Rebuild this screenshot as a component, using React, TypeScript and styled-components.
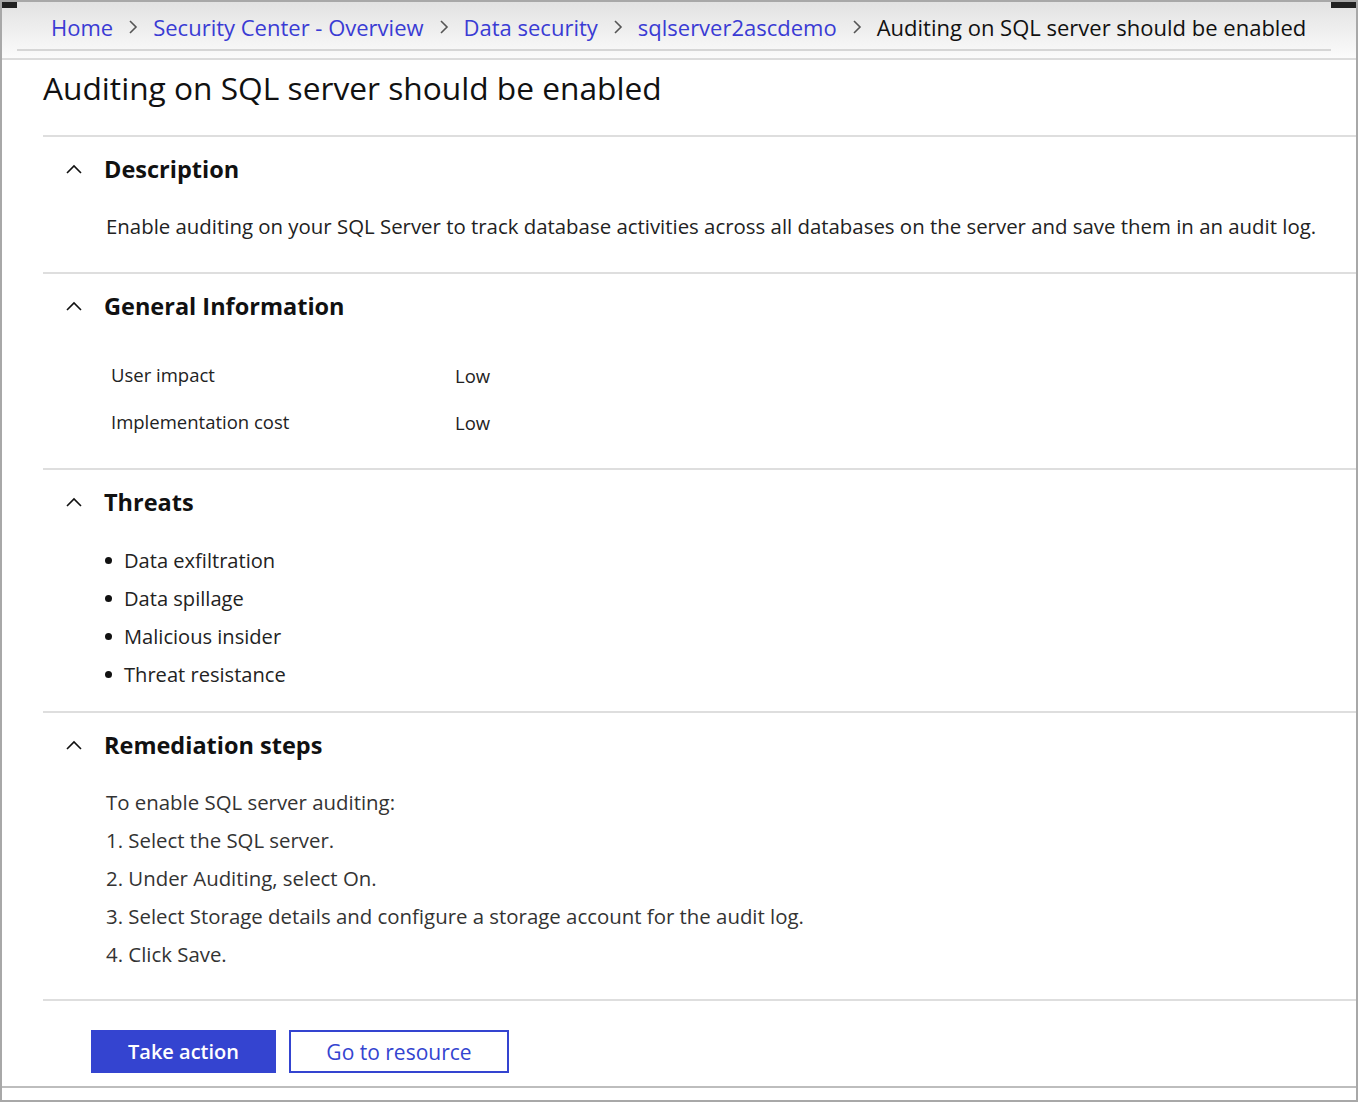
import React from "react";
import styled, { createGlobalStyle } from "styled-components";

const Global = createGlobalStyle`
  html, body { margin: 0; padding: 0; background: #fff; }
  body { font-family: "Open Sans", "Noto Sans", sans-serif; color: #1a1a1a; }
  * { box-sizing: border-box; }
`;

const Frame = styled.div`
  width: 1358px;
  height: 1102px;
  border: 2px solid #a8a8a8;
  display: flex;
  flex-direction: column;
  background: #fff;
`;

const Header = styled.header`
  position: relative;
  height: 58px;
  flex: none;
  background: linear-gradient(#e2e2e2, #fbfbfb);
  border-bottom: 2px solid #dcdcdc;
  padding: 0 25px 0 15px;
`;

const Cap = styled.span<{ $side: "left" | "right" }>`
  position: absolute;
  top: 0;
  ${(p) => (p.$side === "left" ? "left: 0; width: 15px;" : "right: 0; width: 25px;")}
  height: 6px;
  background: #222;
`;

const Crumbs = styled.nav`
  height: 49px;
  border-bottom: 2px solid #d6d6d6;
  display: flex;
  align-items: center;
  padding-left: 34px;
  padding-top: 2px;
  font-size: 22px;
  white-space: nowrap;
`;

const Crumb = styled.a`
  color: #3a3bd4;
  text-decoration: none;
`;

const Current = styled.span`
  color: #111;
`;

const Sep = styled.span`
  display: inline-flex;
  margin: 0 15px;
  color: #555;
`;

const Main = styled.main`
  flex: 1;
  padding-left: 41px;
  display: flex;
  flex-direction: column;
`;

const Title = styled.h1`
  margin: 0;
  height: 75px;
  display: flex;
  align-items: center;
  padding-bottom: 20px;
  font-size: 31.7px;
  font-weight: 400;
  color: #111;
`;

const Section = styled.section<{ $h: number }>`
  border-top: 2px solid #dedede;
  height: ${(p) => p.$h}px;
  display: flex;
  flex-direction: column;
`;

const SectionHead = styled.div`
  height: 64px;
  flex: none;
  display: flex;
  align-items: center;
  padding-left: 22px;
  gap: 21px;
`;

const SectionTitle = styled.h2`
  margin: 0;
  font-size: 23.5px;
  font-weight: 700;
  color: #111;
`;

const Body = styled.div<{ $pl: number; $pt?: number; $color?: string }>`
  padding-left: ${(p) => p.$pl}px;
  padding-top: ${(p) => p.$pt ?? 0}px;
  font-size: 20.4px;
  color: ${(p) => p.$color ?? "#222"};
`;

const Para = styled.p<{ $h?: number }>`
  margin: 0;
  height: ${(p) => p.$h ?? 38}px;
  display: flex;
  align-items: center;
`;

const InfoGrid = styled.div`
  display: grid;
  grid-template-columns: 344px 1fr;
  grid-auto-rows: 47px;
  align-items: center;
  padding-top: 13px;
  padding-left: 68px;
  font-size: 18.5px;
  color: #222;
`;

const InfoValue = styled.span`
  padding-top: 2px;
`;

const List = styled.ul`
  margin: 0;
  padding: 7px 0 0 62px;
  list-style: none;
  font-size: 20.1px;
  color: #222;
`;

const Item = styled.li`
  height: 38px;
  display: flex;
  align-items: center;
  gap: 12px;
  &::before {
    content: "";
    width: 7px;
    height: 7px;
    border-radius: 50%;
    background: #111;
  }
`;

const Actions = styled.div`
  border-top: 2px solid #dedede;
  height: 87px;
  flex: none;
  display: flex;
  align-items: flex-start;
  gap: 13px;
  padding-left: 48px;
  padding-top: 29px;
`;

const Button = styled.button<{ $primary?: boolean }>`
  height: 43px;
  padding: 0;
  width: ${(p) => (p.$primary ? 185 : 220)}px;
  font-family: inherit;
  font-size: ${(p) => (p.$primary ? 20 : 21)}px;
  font-weight: ${(p) => (p.$primary ? 600 : 400)};
  background: ${(p) => (p.$primary ? "#3444d0" : "#fff")};
  color: ${(p) => (p.$primary ? "#fff" : "#3444d0")};
  border: 2px solid #3444d0;
  cursor: pointer;
`;

const Footer = styled.div`
  border-top: 2px solid #bdbdbd;
  margin-left: -41px;
  flex: 1;
`;

const Chevron = () => (
  <svg width="18" height="12" viewBox="0 0 18 12">
    <polyline points="2,10 9,3 16,10" fill="none" stroke="#111" strokeWidth="1.6" />
  </svg>
);

const Arrow = () => (
  <svg width="10" height="16" viewBox="0 0 10 16">
    <polyline points="2,2 8,8 2,14" fill="none" stroke="#555" strokeWidth="1.6" />
  </svg>
);

const crumbs = ["Home", "Security Center - Overview", "Data security", "sqlserver2ascdemo"];

export default function App() {
  return (
    <>
      <Global />
      <Frame>
        <Header>
          <Cap $side="left" />
          <Cap $side="right" />
          <Crumbs>
            {crumbs.map((c) => (
              <React.Fragment key={c}>
                <Crumb href="#">{c}</Crumb>
                <Sep>
                  <Arrow />
                </Sep>
              </React.Fragment>
            ))}
            <Current>Auditing on SQL server should be enabled</Current>
          </Crumbs>
        </Header>
        <Main>
          <Title>Auditing on SQL server should be enabled</Title>
          <Section $h={137}>
            <SectionHead>
              <Chevron />
              <SectionTitle>Description</SectionTitle>
            </SectionHead>
            <Body $pl={63}>
              <Para $h={50}>
                Enable auditing on your SQL Server to track database activities across all databases on the server and save them in an audit log.
              </Para>
            </Body>
          </Section>
          <Section $h={196}>
            <SectionHead>
              <Chevron />
              <SectionTitle>General Information</SectionTitle>
            </SectionHead>
            <InfoGrid>
              <span>User impact</span>
              <InfoValue>Low</InfoValue>
              <span>Implementation cost</span>
              <InfoValue>Low</InfoValue>
            </InfoGrid>
          </Section>
          <Section $h={243}>
            <SectionHead>
              <Chevron />
              <SectionTitle>Threats</SectionTitle>
            </SectionHead>
            <List>
              <Item>Data exfiltration</Item>
              <Item>Data spillage</Item>
              <Item>Malicious insider</Item>
              <Item>Threat resistance</Item>
            </List>
          </Section>
          <Section $h={288}>
            <SectionHead>
              <Chevron />
              <SectionTitle>Remediation steps</SectionTitle>
            </SectionHead>
            <Body $pl={63} $pt={6} $color="#333">
              <Para>To enable SQL server auditing:</Para>
              <Para>1. Select the SQL server.</Para>
              <Para>2. Under Auditing, select On.</Para>
              <Para>3. Select Storage details and configure a storage account for the audit log.</Para>
              <Para>4. Click Save.</Para>
            </Body>
          </Section>
          <Actions>
            <Button $primary>Take action</Button>
            <Button>Go to resource</Button>
          </Actions>
          <Footer />
        </Main>
      </Frame>
    </>
  );
}
